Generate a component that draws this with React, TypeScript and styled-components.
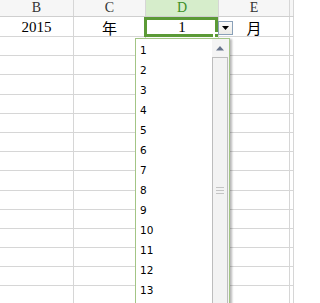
import React from "react";
import styled, { createGlobalStyle } from "styled-components";

const Global = createGlobalStyle`
  html, body { margin: 0; padding: 0; background: #fff; }
  body { overflow: hidden; }
`;

const COLS = [74, 72, 73, 71];
const GRID = "#d6d6d6";

const Sheet = styled.div`
  position: relative;
  width: 294px;
  height: 303px;
  overflow: hidden;
  background: #fff;
  font-family: "Liberation Serif", "Noto Sans CJK SC", serif;
`;

const HeaderRow = styled.div`
  display: flex;
  height: 17px;
  box-sizing: border-box;
  border-bottom: 1px solid #cfcfcf;
  background: #f6f6f6;
`;

const HeaderCell = styled.div<{ $w?: number; $active?: boolean }>`
  flex: ${(p) => (p.$w ? `0 0 ${p.$w}px` : "1 1 auto")};
  box-sizing: border-box;
  border-right: 1px solid ${GRID};
  display: flex;
  align-items: center;
  justify-content: center;
  font-size: 14px;
  line-height: 16px;
  color: ${(p) => (p.$active ? "#3d8f26" : "#333")};
  background: ${(p) => (p.$active ? "#d6edcb" : "transparent")};
`;

const Row = styled.div<{ $h: number }>`
  display: flex;
  height: ${(p) => p.$h}px;
  box-sizing: border-box;
  border-bottom: 1px solid ${GRID};
`;

const Cell = styled.div<{ $w?: number }>`
  flex: ${(p) => (p.$w ? `0 0 ${p.$w}px` : "1 1 auto")};
  box-sizing: border-box;
  border-right: 1px solid ${GRID};
  display: flex;
  align-items: center;
  justify-content: center;
  font-size: 15px;
  color: #000;
  padding-top: 1px;
`;

const Selection = styled.div`
  position: absolute;
  left: 144px;
  top: 17px;
  width: 74px;
  height: 20px;
  box-sizing: border-box;
  border: 3px solid #5b9a36;
  pointer-events: none;
`;

const Handle = styled.div`
  position: absolute;
  right: -3px;
  bottom: -3px;
  width: 5px;
  height: 5px;
  background: #fff;
  &::after {
    content: "";
    position: absolute;
    right: 0;
    bottom: 0;
    width: 3px;
    height: 3px;
    background: #5b9a36;
  }
`;

const DropButton = styled.div`
  position: absolute;
  left: 218px;
  top: 21px;
  width: 15px;
  height: 14px;
  box-sizing: border-box;
  border: 1px solid #8aa0b8;
  background: linear-gradient(#fbfbfb, #ecebe6);
  display: flex;
  align-items: center;
  justify-content: center;
`;

const DropList = styled.div`
  position: absolute;
  left: 135px;
  top: 38px;
  width: 95px;
  height: 290px;
  box-sizing: border-box;
  border: 1px solid #a3c585;
  background: #fff;
  box-shadow: 2px 1px 2px rgba(0, 0, 0, 0.28);
  display: flex;
`;

const Items = styled.div`
  flex: 1 1 auto;
  display: flex;
  flex-direction: column;
`;

const Item = styled.div`
  height: 20px;
  flex: 0 0 20px;
  display: flex;
  align-items: center;
  padding-left: 4px;
  padding-top: 1px;
  box-sizing: border-box;
  font-family: "DejaVu Sans", "Liberation Sans", sans-serif;
  font-size: 10.5px;
  color: #000;
`;

const ScrollBar = styled.div`
  flex: 0 0 17px;
  display: flex;
  flex-direction: column;
  background: #f4f4f4;
`;

const ArrowBox = styled.div`
  flex: 0 0 18px;
  display: flex;
  align-items: center;
  justify-content: center;
  padding-right: 1px;
`;

const Thumb = styled.div`
  flex: 1 1 auto;
  box-sizing: border-box;
  width: 16px;
  border: 1px solid #bdbdbd;
  border-bottom: none;
  background: #f3f3f3;
  display: flex;
  align-items: flex-start;
  justify-content: center;
  padding-top: 128px;
`;

export default function App() {
  const rows = Array.from({ length: 15 }, (_, i) => i);
  const items = Array.from({ length: 13 }, (_, i) => i + 1);
  return (
    <>
      <Global />
      <Sheet>
        <HeaderRow>
          <HeaderCell $w={COLS[0]}>B</HeaderCell>
          <HeaderCell $w={COLS[1]}>C</HeaderCell>
          <HeaderCell $w={COLS[2]} $active>D</HeaderCell>
          <HeaderCell $w={COLS[3]}>E</HeaderCell>
          <HeaderCell />
        </HeaderRow>
        {rows.map((r) => (
          <Row key={r} $h={r === 0 ? 20 : 19.2}>
            <Cell $w={COLS[0]}>{r === 0 ? "2015" : ""}</Cell>
            <Cell $w={COLS[1]}>{r === 0 ? "年" : ""}</Cell>
            <Cell $w={COLS[2]}>{r === 0 ? "1" : ""}</Cell>
            <Cell $w={COLS[3]}>{r === 0 ? "月" : ""}</Cell>
            <Cell />
          </Row>
        ))}
        <Selection>
          <Handle />
        </Selection>
        <DropButton>
          <svg width="7" height="4" viewBox="0 0 7 4">
            <path d="M0 0 H7 L3.5 4 Z" fill="#000" />
          </svg>
        </DropButton>
        <DropList>
          <Items>
            {items.map((n) => (
              <Item key={n}>{n}</Item>
            ))}
          </Items>
          <ScrollBar>
            <ArrowBox>
              <svg width="8" height="5" viewBox="0 0 8 5">
                <path d="M0 4.5 H8 L4 0 Z" fill="#65728a" />
              </svg>
            </ArrowBox>
            <Thumb>
              <svg width="8" height="9" viewBox="0 0 8 9">
                <path d="M0 1.5 H8 M0 4.5 H8 M0 7.5 H8" stroke="#c4c4c4" strokeWidth="1" />
              </svg>
            </Thumb>
          </ScrollBar>
        </DropList>
      </Sheet>
    </>
  );
}
